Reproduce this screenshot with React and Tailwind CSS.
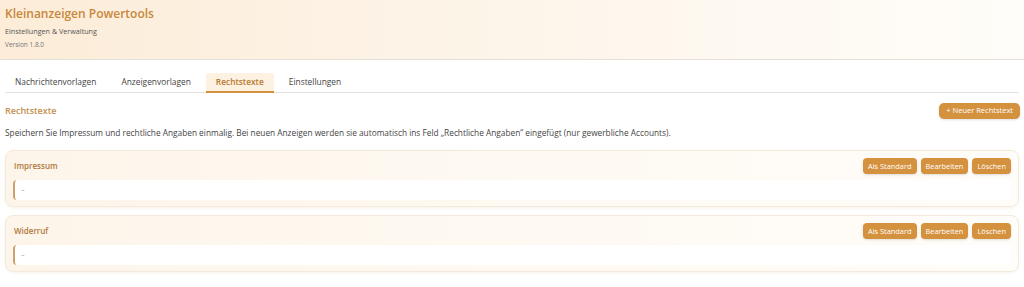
import React, { useState } from 'react';

const tabs = ['Nachrichtenvorlagen', 'Anzeigenvorlagen', 'Rechtstexte', 'Einstellungen'];

const texts = [
  { id: 1, title: 'Impressum', body: '–' },
  { id: 2, title: 'Widerruf', body: '–' },
];

const SmallButton = ({ children }) => (
  <button className="h-4 px-[5px] rounded-[4px] bg-[#d4913e] text-white text-[7.4px] leading-none shadow-sm">
    {children}
  </button>
);

const LegalCard = ({ item }) => (
  <div className="rounded-lg border border-[#f3eadb] bg-gradient-to-r from-[#fdf5ea] to-[#fffdf9] shadow-[0_1px_3px_rgba(200,160,100,0.12)] px-[7px] pt-[7px] pb-[6px]">
    <div className="flex items-center justify-between h-4 mb-[6px]">
      <div className="pl-[1px] text-[8px] font-semibold text-[#b0793a]">{item.title}</div>
      <div className="flex gap-1">
        <SmallButton>Als Standard</SmallButton>
        <SmallButton>Bearbeiten</SmallButton>
        <SmallButton>Löschen</SmallButton>
      </div>
    </div>
    <div className="h-5 rounded-[4px] bg-white border-l-2 border-[#c9a26d] flex items-center pl-[6px] text-[7px] text-gray-400">
      {item.body}
    </div>
  </div>
);

export default function App() {
  const [active, setActive] = useState('Rechtstexte');

  return (
    <div className="min-h-screen bg-white font-['Open_Sans','Noto_Sans',sans-serif] text-[#333]">
      {/* Header */}
      <div className="h-[60px] px-[5px] pt-[5px] bg-gradient-to-r from-[#fcecd8] via-[#fdf5ea] to-[#fffdf9] border-b border-[#e6e1d8]">
        <h1 className="text-[12px] leading-[17px] font-semibold text-[#c8873a]">Kleinanzeigen Powertools</h1>
        <p className="mt-[3px] text-[7.2px] leading-[12px] text-[#555]">Einstellungen &amp; Verwaltung</p>
        <p className="mt-[2px] text-[6.5px] leading-[12px] text-[#777]">Version 1.8.0</p>
      </div>

      <div className="px-[5px]">
        {/* Tabs */}
        <div className="mt-[13px] flex border-b border-[#e4e0da]">
          {tabs.map(t => (
            <button
              key={t}
              onClick={() => setActive(t)}
              className={`h-[20px] px-[10px] mr-[5px] text-[8.4px] leading-none -mb-px border-b-2 ${
                active === t
                  ? 'bg-[#fdf1e2] border-[#d4913e] text-[#b97a30] font-semibold rounded-t-[3px]'
                  : 'border-transparent text-[#444]'
              }`}
            >
              {t}
            </button>
          ))}
        </div>

        {/* Section header */}
        <div className="mt-[10px] flex items-center justify-between">
          <h2 className="text-[9px] font-semibold text-[#c39050]">Rechtstexte</h2>
          <button className="h-4 px-[7px] rounded-[5px] bg-[#d4913e] text-white text-[7.5px] leading-none shadow-sm -mr-[1px]">
            + Neuer Rechtstext
          </button>
        </div>

        <p className="mt-[8px] text-[8.3px] text-[#444]">
          Speichern Sie Impressum und rechtliche Angaben einmalig. Bei neuen Anzeigen werden sie automatisch ins Feld „Rechtliche Angaben“ eingefügt (nur gewerbliche Accounts).
        </p>

        <div className="mt-[11px] flex flex-col gap-2">
          {texts.map(item => (
            <LegalCard key={item.id} item={item} />
          ))}
        </div>
      </div>
    </div>
  );
}
